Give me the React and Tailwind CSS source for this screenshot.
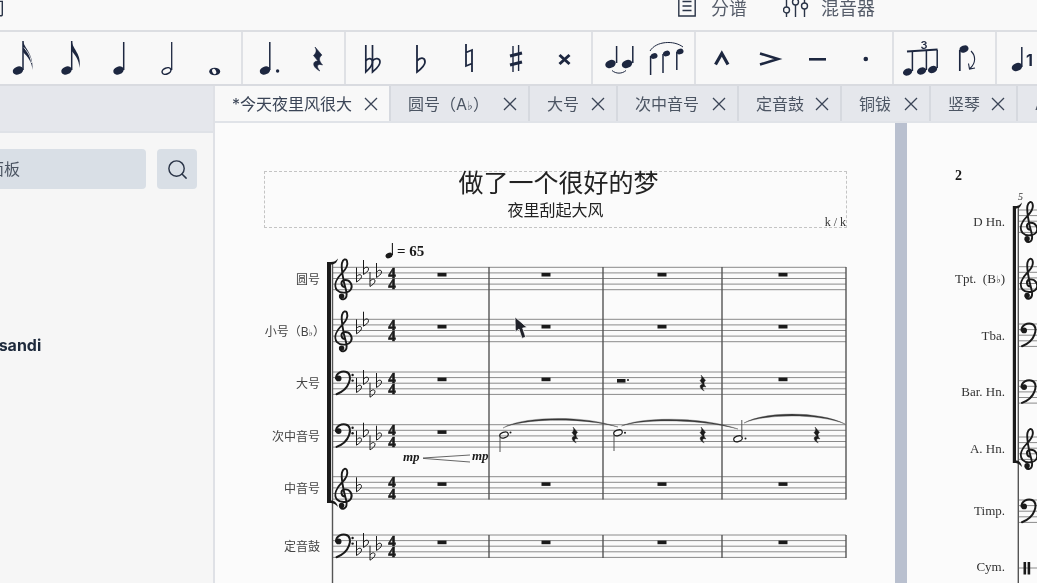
import { Search } from 'lucide-react';

const INK = '#1d2740';
const SCORE = '#1a1a1a';
const LINE = '#8a8a8a';
const BAR = '#555555';
const GAP = 5.6;

const flatGlyph = <span className="font-['DejaVu_Sans',sans-serif] text-[0.78em]">♭</span>;

const tabs = [
  { name: '*今天夜里风很大', w: 'w-[176px]', active: true },
  { name: <>圆号（A{flatGlyph}）</>, w: 'w-[139px]' },
  { name: '大号', w: 'w-[88px]' },
  { name: '次中音号', w: 'w-[121px]' },
  { name: '定音鼓', w: 'w-[103px]' },
  { name: '铜钹', w: 'w-[89px]' },
  { name: '竖琴', w: 'w-[87px]' },
];

function Head({ x, y, open, fill = INK, rx = 5.4, ry = 3.9 }) {
  return (
    <ellipse
      cx={x} cy={y} rx={rx} ry={ry}
      transform={`rotate(-22 ${x} ${y})`}
      fill={open ? 'none' : fill}
      stroke={fill}
      strokeWidth={open ? 1.5 : 0}
    />
  );
}

function Stem({ x, y1, y2, color = INK, w = 1.5 }) {
  return <line x1={x} x2={x} y1={y1} y2={y2} stroke={color} strokeWidth={w} />;
}

function Flat({ x, y, color = SCORE }) {
  return (
    <path
      d={`M${x} ${y - 10}V${y + 4.5}C${x + 2} ${y + 3} ${x + 5} ${y + 1.5} ${x + 5} ${y - 1}C${x + 5} ${y - 3.5} ${x + 2} ${y - 3.5} ${x} ${y - 0.8}`}
      fill="none" stroke={color} strokeWidth="1"
    />
  );
}

function QuarterRest({ x, y, fill = SCORE, s = 1 }) {
  return (
    <path
      transform={`translate(${x} ${y}) scale(${s})`}
      d="M-2-8L2.6-2.6C0.4-1 0.4 1 3 4C0.4 3-2 4 1.2 8C-4.6 5-3.4 1 0 1.4L-3-2.4C-1-4-0.8-6-2-8Z"
      fill={fill} stroke={fill} strokeWidth="0.4"
    />
  );
}

function Treble({ x, top }) {
  const y = top + GAP * 3;
  return (
    <g transform={`translate(${x} ${y})`}>
      <path
        d="M1 3C-3 3-4-3 0-4C6-5 9 1 7 5C5 9-3 10-7 6C-11 1-7-6-2-11C2-15 4-20 3-23C2-26-1-25-2-21C-3-17-1-4 2 6C3 10 3 14 0 15C-3 16-5 13-3 11"
        fill="none" stroke={SCORE} strokeWidth="1.9" strokeLinecap="round"
      />
      <circle cx="-2.4" cy="12" r="2.7" fill={SCORE} />
    </g>
  );
}

function Bass({ x, top }) {
  const y = top + GAP;
  return (
    <g transform={`translate(${x} ${y})`}>
      <circle cx="-5.4" cy="0.8" r="2.9" fill={SCORE} />
      <path d="M-8 1C-8-5-2-6.5 1.5-5.8C6-5 7 0 5 5C3 10.5-2 14.5-7.5 16.6" fill="none" stroke={SCORE} strokeWidth="2" strokeLinecap="round" />
      <circle cx="8.6" cy="-2.6" r="1.2" fill={SCORE} />
      <circle cx="8.6" cy="3" r="1.2" fill={SCORE} />
    </g>
  );
}

function Time({ x, top }) {
  return (
    <g fontFamily="'Liberation Serif', serif" fontWeight="700" fontSize="15" textAnchor="middle" fill={SCORE} stroke={SCORE} strokeWidth="0.6">
      <text x={x} y={top + 10.6}>4</text>
      <text x={x} y={top + 21.8}>4</text>
    </g>
  );
}

function Staff({ x1, x2, top }) {
  return [0, 1, 2, 3, 4].map(i => (
    <line key={i} x1={x1} x2={x2} y1={top + i * GAP} y2={top + i * GAP} stroke={LINE} strokeWidth="1" />
  ));
}

function WholeRest({ x, top }) {
  return <rect x={x - 4.5} y={top + 5.6} width="9" height="3.6" fill={SCORE} />;
}

function FirstPageStaves() {
  const staves = [
    { top: 267.3, clef: 'treble', flats: [10.2, 2.7, 14.7, 5.7] },
    { top: 319.3, clef: 'treble', flats: [10, 2.4] },
    { top: 372, clef: 'bass', flats: [16, 8, 20.7, 11] },
    { top: 424.7, clef: 'bass', flats: [16, 8, 20.7, 11] },
    { top: 476.7, clef: 'treble', flats: [10.6] },
    { top: 535, clef: 'bass', flats: [16, 8, 20.7, 11] },
  ];
  const flatX = [356.5, 363.5, 370, 376.5];
  const bars = [489, 603, 722, 846];

  return (
    <svg width="572" height="343" viewBox="322 240 572 343" className="block">
      {/* tempo */}
      <Head x={389} y={255.5} fill={SCORE} rx={3.6} ry={2.6} />
      <Stem x={392.4} y1={243} y2={255} color={SCORE} w={1.1} />
      <text x="397" y="256" fontFamily="'Liberation Serif', serif" fontWeight="700" fontSize="15" fill={SCORE}>= 65</text>

      {staves.map(s => (
        <g key={s.top}>
          <Staff x1={332} x2={846} top={s.top} />
          {s.clef === 'treble' ? <Treble x={344} top={s.top} /> : <Bass x={344} top={s.top} />}
          {s.flats.map((f, i) => <Flat key={i} x={flatX[i]} y={s.top + f} />)}
          <Time x={392} top={s.top} />
        </g>
      ))}

      {/* bar lines */}
      <line x1="332.5" x2="332.5" y1="262" y2="583" stroke={BAR} strokeWidth="1.4" />
      {bars.map(x => (
        <g key={x} stroke={BAR} strokeWidth="1.4">
          <line x1={x} x2={x} y1="267" y2="499.5" />
          <line x1={x} x2={x} y1="535" y2="558" />
        </g>
      ))}

      {/* bracket */}
      <path d="M327 503V262H331C334 262 336 261 338 258.5C337 263 334 264.5 331 264.5V500.5C334 500.5 337 502.5 338 507C336 504.5 334 503.5 331 503Z" fill={SCORE} />

      {/* measure rests */}
      {[442, 546, 662, 783].map(x => (
        <g key={x}>
          <WholeRest x={x} top={267.3} />
          <WholeRest x={x} top={319.3} />
          {x !== 662 && <WholeRest x={x} top={372} />}
          {x === 442 && <WholeRest x={x} top={424.7} />}
          <WholeRest x={x} top={476.7} />
          <WholeRest x={x} top={535} />
        </g>
      ))}

      {/* tuba bar */}
      <rect x="617" y="379" width="8.5" height="3.6" fill={SCORE} />
      <circle cx="628" cy="380" r="1" fill={SCORE} />
      <QuarterRest x={703} y={383} />

      {/* baritone line */}
      <ellipse cx="504" cy="435" rx="4.4" ry="2.8" fill="none" stroke={SCORE} strokeWidth="1.2" transform="rotate(-20 504 435)" />
      <Stem x={500} y1={436} y2={452} color="#555" w={1} />
      <circle cx="510.5" cy="432.5" r="1" fill={SCORE} />
      <QuarterRest x={575} y={435} />

      <ellipse cx="618" cy="432.7" rx="4.4" ry="2.8" fill="none" stroke={SCORE} strokeWidth="1.2" transform="rotate(-20 618 432.7)" />
      <Stem x={614} y1={434} y2={451} color="#555" w={1} />
      <circle cx="625" cy="432.7" r="1" fill={SCORE} />
      <QuarterRest x={703} y={435} />

      <ellipse cx="738" cy="438.7" rx="4.4" ry="2.8" fill="none" stroke={SCORE} strokeWidth="1.2" transform="rotate(-20 738 438.7)" />
      <Stem x={741.8} y1={420} y2={438} color="#555" w={1} />
      <circle cx="745.5" cy="438.5" r="1" fill={SCORE} />
      <QuarterRest x={817} y={435} />

      {/* ties */}
      <g fill="#333" stroke="#555" strokeWidth="0.4">
        <path d="M503 428C520 417 580 414 618 427C580 416.5 520 419 503 428Z" />
        <path d="M621.5 426C640 417 700 416 738 429C700 418.5 640 419 621.5 426Z" />
        <path d="M744 423C765 411 820 411 845 424C820 413.5 765 413.5 744 423Z" />
      </g>

      {/* dynamics */}
      <g fontFamily="'Liberation Serif', serif" fontStyle="italic" fontWeight="700" fontSize="13" fill={SCORE}>
        <text x="403" y="461">mp</text>
        <text x="472" y="460">mp</text>
      </g>
      <path d="M423 458L470 455M423 458.4L470 462" stroke="#555" strokeWidth="0.9" fill="none" />

      {/* pointer */}
      <path d="M515 317L515.4 332L519 329L522 338.4L525.6 337L522.6 328L527 327.4Z" fill="#20222a" stroke="#fff" strokeWidth="0.7" />
    </svg>
  );
}

function SecondPageStaves() {
  const staves = [
    { top: 210, clef: 'treble' },
    { top: 266.7, clef: 'treble' },
    { top: 324, clef: 'bass' },
    { top: 380.7, clef: 'bass' },
    { top: 437, clef: 'treble' },
    { top: 500, clef: 'bass' },
  ];
  return (
    <svg width="29" height="393" viewBox="1008 190 29 393" className="block">
      <text x="1018" y="199.5" fontFamily="'Liberation Serif', serif" fontStyle="italic" fontSize="10" fill="#333">5</text>
      {staves.map(s => (
        <g key={s.top}>
          <Staff x1={1018} x2={1037} top={s.top} />
          {s.clef === 'treble' ? <Treble x={1029.5} top={s.top} /> : <Bass x={1029.5} top={s.top} />}
        </g>
      ))}
      <line x1="1018" x2="1037" y1="568" y2="568" stroke={LINE} strokeWidth="1" />
      <rect x="1023.5" y="562" width="2.6" height="12.5" fill={SCORE} />
      <rect x="1027.6" y="562" width="2.6" height="12.5" fill={SCORE} />
      <line x1="1018.3" x2="1018.3" y1="206" y2="583" stroke={BAR} strokeWidth="1.4" />
      <path d="M1012.8 463V206H1016C1018 206 1020 205 1022 202.5C1021 207 1019 208.4 1016 208.4V460.6C1019 460.6 1021 462.5 1022 467C1020 464.5 1018 463.4 1016 463Z" fill={SCORE} />
    </svg>
  );
}

// width is the drawing area, the 2px divider comes on top of it
function Group({ className, x, width, children }) {
  return (
    <div className={`h-[52px] shrink-0 ${className}`}>
      <svg width={width} height="52" viewBox={`${x} 32 ${width} 52`} className="block overflow-visible">
        {children}
      </svg>
    </div>
  );
}

function Toolbar() {
  const divider = 'border-r-2 border-[#dfe1e5]';
  return (
    <div className="flex h-[54px] shrink-0 border-b-2 border-[#d9dbe0] bg-[#f8f8f8]">
      <Group className={`w-[243px] ${divider}`} x={0} width={241}>
        <Head x={18} y={70.5} />
        <Stem x={23} y1={41} y2={70} />
        <path d="M23 41C24 48 33.5 53 32.5 70C32 62 28 57 23 52Z" fill={INK} />
        <path d="M24 47.5C27 51.5 30.5 55 31.5 63" fill="none" stroke="#f8f8f8" strokeWidth="0.9" />
        <Head x={66.5} y={70.5} />
        <Stem x={71.7} y1={41} y2={70} />
        <path d="M71.7 41C73 50 82 54 79.4 68C79.4 60 75 55 71.7 51Z" fill={INK} />
        <Head x={118.5} y={70.5} />
        <Stem x={123.7} y1={42} y2={70} />
        <Head x={166.5} y={71} open rx={4.6} ry={3} />
        <Stem x={171.7} y1={42} y2={70} w={1.3} />
        <ellipse cx="214.7" cy="71.5" rx="5.5" ry="3.8" fill={INK} />
        <ellipse cx="214.2" cy="71.5" rx="1.9" ry="2.8" fill="#f8f8f8" transform="rotate(-25 214.2 71.5)" />
      </Group>
      <Group className={`w-[103px] ${divider}`} x={243} width={101}>
        <Head x={265} y={70.5} />
        <Stem x={269.8} y1={42} y2={70} />
        <circle cx="277.6" cy="71" r="1.7" fill={INK} />
        <QuarterRest x={318} y={59} fill={INK} s={1.5} />
      </Group>
      <Group className={`w-[247px] ${divider}`} x={346} width={245}>
        <path d="M365.8 45V72C369 69 372.5 66 372.5 62C372.5 58 368 57.5 365.8 61" fill="none" stroke={INK} strokeWidth="1.7" />
        <path d="M372.5 45V72C376 69 380 66 380 62C380 58 375 57.5 372.5 61" fill="none" stroke={INK} strokeWidth="1.7" />
        <path d="M417 45V72C421 69 425 66 425 62C425 57 420 57 417 61" fill="none" stroke={INK} strokeWidth="1.8" />
        <path d="M466 44V66L472 63.5M472 72V50L466 52.5" fill="none" stroke={INK} strokeWidth="1.8" />
        <path d="M513 46V72M518.6 45V71" stroke={INK} strokeWidth="1.4" />
        <path d="M510 56L522 53M510 65L522 62" stroke={INK} strokeWidth="3" />
        <path d="M559.5 55L569.5 64M569.5 55L559.5 64" stroke={INK} strokeWidth="3" />
      </Group>
      <Group className={`w-[103px] ${divider}`} x={593} width={101}>
        <Head x={610.5} y={64} />
        <Stem x={616.6} y1={46} y2={63} />
        <Head x={627} y={64} />
        <Stem x={632.8} y1={46} y2={63} />
        <path d="M612 70.5C616 74 622 74 626 70.5" fill="none" stroke={INK} strokeWidth="1" />
        <Head x={654} y={56} rx={3.6} ry={2.8} />
        <Stem x={650.6} y1={56} y2={75} />
        <Head x={666.5} y={53.5} rx={3.6} ry={2.8} />
        <Stem x={663} y1={54} y2={73} />
        <Head x={680} y={51.5} rx={3.6} ry={2.8} />
        <Stem x={676.8} y1={52} y2={70} />
        <path d="M650 51C656 41 674 40 683 47" fill="none" stroke={INK} strokeWidth="1" />
      </Group>
      <Group className={`w-[198px] ${divider}`} x={696} width={196}>
        <path d="M715.5 64.5L721.8 53.4L728 64.5" fill="none" stroke={INK} strokeWidth="3.2" />
        <path d="M760 53.5L778 59L760 64.5" fill="none" stroke={INK} strokeWidth="2.6" />
        <rect x="809" y="58" width="17" height="2.6" fill={INK} />
        <circle cx="865.8" cy="59" r="2.3" fill={INK} />
      </Group>
      <Group className={`w-[103px] ${divider}`} x={894} width={101}>
        <text x="924" y="49" textAnchor="middle" fontFamily="Inter, sans-serif" fontWeight="600" fontSize="11" fill={INK}>3</text>
        <path d="M907 51.5L937.6 49.5" stroke={INK} strokeWidth="2.2" />
        <Head x={907.6} y={72} rx={4.8} ry={3.4} />
        <Stem x={912.4} y1={51} y2={71} />
        <Head x={921.6} y={71} rx={4.8} ry={3.4} />
        <Stem x={926.4} y1={50} y2={70} />
        <Head x={932.6} y={69.5} rx={4.8} ry={3.4} />
        <Stem x={937.2} y1={50} y2={68} />
        <Head x={964} y={49} rx={4.6} ry={3.4} />
        <Stem x={959.8} y1={50} y2={71} w={1.7} />
        <path d="M971 51C976 56 976 63 970 68.5M968.5 63.5L969.5 69L975 68" fill="none" stroke={INK} strokeWidth="1.1" />
      </Group>
      <Group className="flex-1" x={997} width={40}>
        <Stem x={1021.8} y1={47} y2={67} />
        <Head x={1017} y={67} />
        <text x="1026" y="66" fontFamily="Inter, sans-serif" fontWeight="700" fontSize="16" fill={INK}>1</text>
      </Group>
    </div>
  );
}

function TopBar() {
  return (
    <div className="flex h-[32px] shrink-0 overflow-hidden border-b-2 border-[#dcdee2] bg-[#f9f9f9] text-[18px] text-[#565d6a]">
      <div className="-ml-[13px] flex h-[16px] items-center text-[#2a3447]">司</div>
      <div className="ml-auto flex h-[16px] items-center pr-[162px]">
        <svg width="18" height="18" viewBox="0 0 18 18" className="shrink-0">
          <path d="M0.8-4V17H17.2V-4" fill="none" stroke="#2a3447" strokeWidth="1.4" />
          <path d="M4.5 2.5H13.5M4.5 7H13.5M4.5 11.5H13.5" stroke="#2a3447" strokeWidth="1.3" />
        </svg>
        <span className="ml-[15px]">分谱</span>
        <svg width="26" height="18" viewBox="0 0 26 18" className="ml-[36px] shrink-0">
          <path d="M3.5 0V8M3.5 14V18M12.5 6V18M21.5 0V4M21.5 10V18" stroke="#2a3447" strokeWidth="1.4" />
          <circle cx="3.5" cy="11" r="3" fill="none" stroke="#2a3447" strokeWidth="1.4" />
          <circle cx="12.5" cy="3" r="3" fill="none" stroke="#2a3447" strokeWidth="1.4" />
          <circle cx="21.5" cy="7" r="3" fill="none" stroke="#2a3447" strokeWidth="1.4" />
        </svg>
        <span className="ml-[12px]">混音器</span>
      </div>
    </div>
  );
}

function TabClose() {
  return (
    <svg width="14" height="14" viewBox="0 0 14 14" className="shrink-0">
      <path d="M1 1L13 13M13 1L1 13" stroke="#3a4456" strokeWidth="1.3" />
    </svg>
  );
}

function Sidebar() {
  return (
    <aside className="w-[215px] shrink-0 overflow-hidden border-r-2 border-[#dfe1e6] bg-[#f6f6f6]">
      <div className="h-[47px] border-b-2 border-[#dfe2e7] bg-[#e5e7ec]" />
      <div className="mt-[16px] flex h-[40px] gap-[11px]">
        <div className="-ml-[20px] flex w-[166px] items-center rounded-[4px] bg-[#d9dfe6] pl-[12px] text-[16px] text-[#4c5563]">
          <span className="-ml-[4px]">面板</span>
        </div>
        <div className="flex w-[40px] items-center justify-center rounded-[4px] bg-[#d9dfe6] text-[#2a3447]">
          <Search size={23} strokeWidth={1.5} />
        </div>
      </div>
      <div className="-ml-[31px] mt-[144px] text-[16px] font-bold leading-[24px] text-[#1e2a3c]">Glissandi</div>
    </aside>
  );
}

function TabBar() {
  return (
    <div className="flex h-[37px] shrink-0 overflow-hidden border-b-2 border-[#e0e3e8] bg-[#e5e7ec] text-[16px]">
      {tabs.map((t, i) => (
        <div
          key={i}
          className={`${t.w} flex shrink-0 items-center justify-between border-r-2 border-[#d6d9df] pl-[17px] pr-[11px] ${t.active ? 'bg-[#f8f8f8] text-[#3a4456]' : 'text-[#4c5563]'}`}
        >
          <span className="whitespace-nowrap">{t.name}</span>
          <TabClose />
        </div>
      ))}
      <div className="flex items-center pl-[17px] text-[#4c5563]">A</div>
    </div>
  );
}

function FirstPage() {
  return (
    <div className="w-[680px] shrink-0 bg-[#fbfbfb]">
      <div className="relative ml-[49px] mt-[48px] flex h-[57px] w-[583px] flex-col items-center border border-dashed border-[#c4c4c4] text-[#222]">
        <div className="-mt-px ml-[6px] text-[25px] leading-[24px]">做了一个很好的梦</div>
        <div className="mt-[3px] text-[16px] leading-[24px]">夜里刮起大风</div>
        <div className="absolute bottom-[-2px] right-0 font-['Liberation_Serif',serif] text-[12px] leading-[14px] text-[#333]">k / k</div>
      </div>
      <div className="mt-[12px] flex">
        <div className="flex w-[107px] flex-col items-end pr-[2px] pt-[28px] text-[12px] text-[#444]">
          <div className="h-[24px] leading-[24px]">圆号</div>
          <div className="-mr-[5px] mt-[28px] h-[24px] leading-[24px]">小号（B{flatGlyph}）</div>
          <div className="mt-[28px] h-[24px] leading-[24px]">大号</div>
          <div className="mt-[29px] h-[24px] leading-[24px]">次中音号</div>
          <div className="mt-[28px] h-[24px] leading-[24px]">中音号</div>
          <div className="mt-[34px] h-[24px] leading-[24px]">定音鼓</div>
        </div>
        <FirstPageStaves />
      </div>
    </div>
  );
}

function SecondPage() {
  return (
    <div className="flex-1 overflow-hidden bg-[#fbfbfb] font-['Liberation_Serif',serif] text-[13px] text-[#333]">
      <div className="ml-[48px] mt-[46px] h-[21px] text-[14px] font-bold leading-[14px] text-[#1a1a1a]">2</div>
      <div className="flex">
        <div className="flex w-[101px] shrink-0 flex-col items-end pr-[3px] pt-[23px]">
          <div className="h-[18px] leading-[18px]">D Hn.</div>
          <div className="mt-[39px] h-[18px] whitespace-nowrap leading-[18px]">Tpt.&nbsp;&nbsp;(B{flatGlyph})</div>
          <div className="mt-[39px] h-[18px] leading-[18px]">Tba.</div>
          <div className="mt-[38px] h-[18px] leading-[18px]">Bar. Hn.</div>
          <div className="mt-[39px] h-[18px] leading-[18px]">A. Hn.</div>
          <div className="mt-[44px] h-[18px] leading-[18px]">Timp.</div>
          <div className="mt-[38px] h-[18px] leading-[18px]">Cym.</div>
        </div>
        <SecondPageStaves />
      </div>
    </div>
  );
}

export default function App() {
  return (
    <div className="flex h-[583px] w-[1037px] flex-col overflow-hidden bg-[#f8f8f8] font-['Inter','Noto_Sans_CJK_SC',sans-serif] blur-[0.35px]">
      <TopBar />
      <Toolbar />
      <div className="flex min-h-0 flex-1">
        <Sidebar />
        <div className="flex min-w-0 flex-1 flex-col">
          <TabBar />
          <div className="flex min-h-0 flex-1 overflow-hidden">
            <FirstPage />
            <div className="w-[12px] shrink-0 bg-[#b9c0cf]" />
            <SecondPage />
          </div>
        </div>
      </div>
    </div>
  );
}
